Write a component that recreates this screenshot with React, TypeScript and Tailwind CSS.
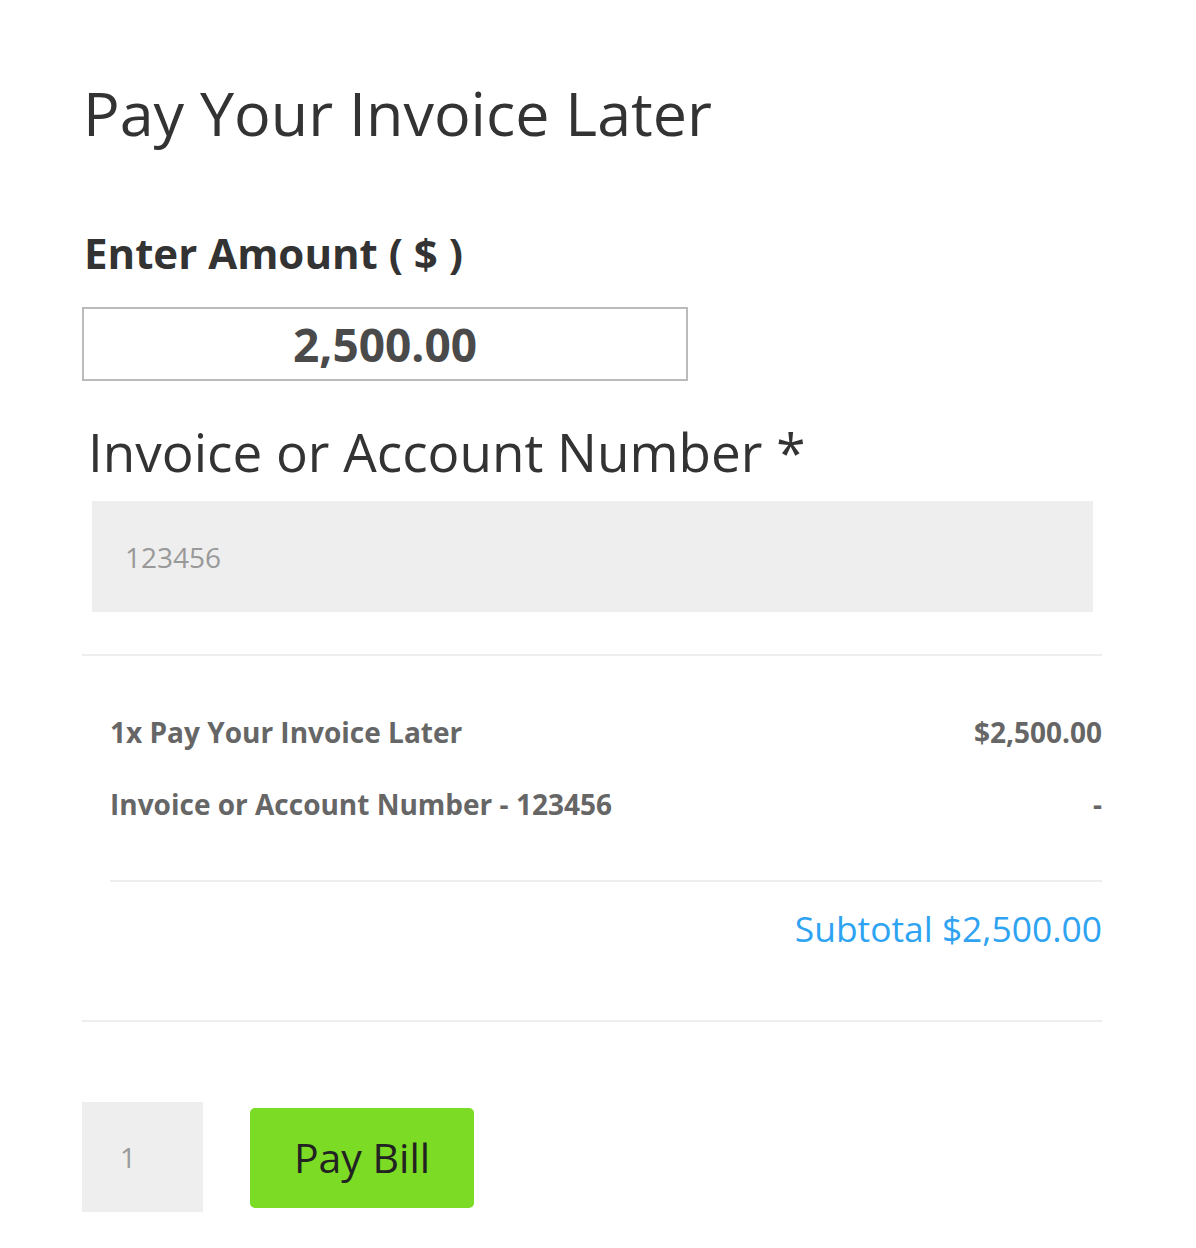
import React from "react";

export default function App() {
  return (
    <div className="min-h-[1248px] w-[1196px] bg-white font-['Open_Sans',sans-serif]">
      <div className="pl-[82px] pr-[94px] pt-[76px]">
        <h1 className="pl-[1px] text-[61px] leading-[74px] font-normal text-[#333333]">Pay Your Invoice Later</h1>
        <div className="mt-[76px] pl-[2px] text-[42px] font-bold leading-[54px] text-[#333333]">Enter Amount ( $ )</div>
        <div className="mt-[27px] flex h-[74px] w-[606px] items-center justify-center border-2 border-[#bbbbbb] text-[46px] font-bold text-[#4a4a4a]">
          2,500.00
        </div>
        <div className="mt-[36px] pl-[6px] text-[53px] leading-[70px] text-[#333333]">Invoice or Account Number *</div>
        <div className="ml-[10px] mt-[14px] mr-[9px] flex h-[111px] items-center bg-[#eeeeee] pl-[33px] text-[28px] text-[#999999]">
          123456
        </div>
        <div className="mt-[42px] h-[2px] bg-[#eeeeee]" />
        <div className="pl-[28px]">
          <div className="mt-[57px] flex items-center justify-between text-[28px] font-bold leading-[38px] text-[#666666]">
            <span>1x Pay Your Invoice Later</span>
            <span>$2,500.00</span>
          </div>
          <div className="mt-[34px] flex items-center justify-between text-[28px] font-bold leading-[38px] text-[#666666]">
            <span>Invoice or Account Number - 123456</span>
            <span>-</span>
          </div>
          <div className="mt-[57px] h-[2px] bg-[#eeeeee]" />
          <div className="mt-[22px] text-right text-[35.4px] leading-[48px] text-[#2ea3f2]">Subtotal $2,500.00</div>
        </div>
        <div className="mt-[68px] h-[2px] bg-[#eeeeee]" />
        <div className="mt-[80px] flex items-center gap-[47px]">
          <div className="flex h-[110px] w-[121px] items-center bg-[#eeeeee] pl-[38px] text-[28px] text-[#999999]">1</div>
          <button className="mt-[2px] h-[100px] w-[224px] rounded-[5px] bg-[#7cdb24] text-[41px] text-[#222222]">Pay Bill</button>
        </div>
      </div>
    </div>
  );
}
